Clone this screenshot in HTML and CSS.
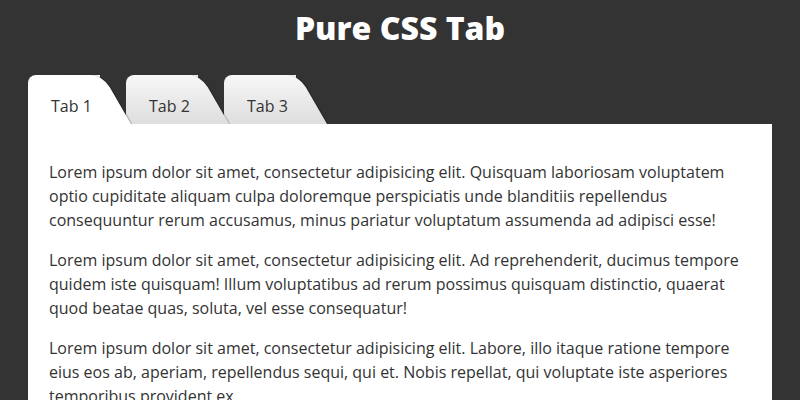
FILE: index.html
```html
<!DOCTYPE html>
<html lang="en">
<head>
    <meta charset="UTF-8">
    <meta name="viewport" content="width=device-width, initial-scale=1.0">
    <title>Pure CSS Tab</title>
    <link rel="stylesheet" href="styles.css">
</head>
<body>
    <div class="container">
        <h1>Pure CSS Tab</h1>
        <div class="tabs">
            <input type="radio" name="tabs" id="tab1" checked>
            <label for="tab1" class="tab tab-1">Tab 1</label>
            <input type="radio" name="tabs" id="tab2">
            <label for="tab2" class="tab tab-2">Tab 2</label>
            <input type="radio" name="tabs" id="tab3">
            <label for="tab3" class="tab tab-3">Tab 3</label>

            <div class="panels">
                <div class="panel panel-1">
                    <p>Lorem ipsum dolor sit amet, consectetur adipisicing elit. Quisquam laboriosam voluptatem optio cupiditate aliquam culpa doloremque perspiciatis unde blanditiis repellendus consequuntur rerum accusamus, minus pariatur voluptatum assumenda ad adipisci esse!</p>
                    <p>Lorem ipsum dolor sit amet, consectetur adipisicing elit. Ad reprehenderit, ducimus tempore quidem iste quisquam! Illum voluptatibus ad rerum possimus quisquam distinctio, quaerat quod beatae quas, soluta, vel esse consequatur!</p>
                    <p>Lorem ipsum dolor sit amet, consectetur adipisicing elit. Labore, illo itaque ratione tempore eius eos ab, aperiam, repellendus sequi, qui et. Nobis repellat, qui voluptate iste asperiores temporibus provident ex.</p>
                </div>
                <div class="panel panel-2">
                    <p>Lorem ipsum dolor sit amet, consectetur adipisicing elit. Ad reprehenderit, ducimus tempore quidem iste quisquam! Illum voluptatibus ad rerum possimus quisquam distinctio, quaerat quod beatae quas, soluta, vel esse consequatur!</p>
                </div>
                <div class="panel panel-3">
                    <p>Lorem ipsum dolor sit amet, consectetur adipisicing elit. Labore, illo itaque ratione tempore eius eos ab, aperiam, repellendus sequi, qui et. Nobis repellat, qui voluptate iste asperiores temporibus provident ex.</p>
                </div>
            </div>
        </div>
    </div>
</body>
</html>
```

FILE: styles.css
```css
body {
    margin: 0;
    background: #333;
    color: #333;
    font-family: "Open Sans", Arial, sans-serif;
    font-size: 16px;
}
.container {
    max-width: 744px;
    margin: 0 auto;
}
h1 {
    margin: 6px 0 26px;
    color: #fff;
    font-size: 32px;
    font-weight: 800;
    text-align: center;
}
.tabs {
    display: flex;
    flex-wrap: wrap;
}
.tabs input {
    display: none;
}
.tab {
    position: relative;
    width: 72px;
    box-sizing: border-box;
    padding: 20px 0 6px 23px;
    margin-right: 26px;
    line-height: 23px;
    background: linear-gradient(#f7f7f7, #dedede);
    border-top-left-radius: 8px;
    cursor: pointer;
}
/* slanted right edge of every tab */
.tab::after {
    content: "";
    position: absolute;
    top: 0;
    right: -31px;
    width: 40px;
    height: 100%;
    background: inherit;
    border-top-right-radius: 12px;
    transform: skewX(30deg);
    transform-origin: 0 100%;
    box-shadow: 1px 0 1px rgba(0, 0, 0, 0.3);
    z-index: -1;
}
.tab-1 { z-index: 3; }
.tab-2 { z-index: 2; }
.tab-3 { z-index: 1; }
.tabs input:checked + .tab {
    background: #fff;
    z-index: 4;
}
.panels {
    position: relative;
    z-index: 5;
    flex-basis: 100%;
    background: #fff;
    padding: 20px 21px;
}
.panel {
    display: none;
}
.panel p {
    margin: 16px 0;
    line-height: 24px;
}
#tab1:checked ~ .panels .panel-1,
#tab2:checked ~ .panels .panel-2,
#tab3:checked ~ .panels .panel-3 {
    display: block;
}
```
